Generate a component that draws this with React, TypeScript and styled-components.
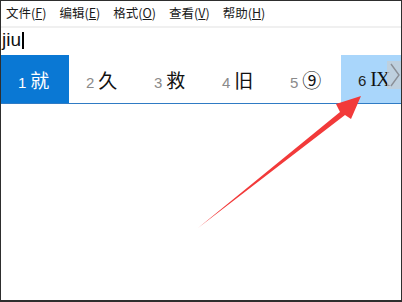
import * as React from 'react'
import styled, { createGlobalStyle } from 'styled-components'

const menus = [
    { label: '文件', key: 'F' },
    { label: '编辑', key: 'E' },
    { label: '格式', key: 'O' },
    { label: '查看', key: 'V' },
    { label: '帮助', key: 'H' }
]

const candidates = ['就', '久', '救', '旧', '⑨', 'IX']

export default class App extends React.Component {
    public render() {
        return (
            <Window>
                <GlobalStyle />
                <MenuBar>
                    {menus.map(m => (
                        <MenuItem key={m.key}>
                            {m.label}(<u>{m.key}</u>)
                        </MenuItem>
                    ))}
                </MenuBar>
                <Editor>
                    jiu<Caret />
                </Editor>

                <CandidateBar>
                    {candidates.map((c, i) => (
                        <Candidate key={c} state={i === 0 ? 'active' : i === 5 ? 'hover' : 'normal'}>
                            <div>
                                <span>{i + 1}</span>
                                <b className={c === 'IX' ? 'serif' : ''}>{c}</b>
                            </div>
                        </Candidate>
                    ))}
                    <NextPage>
                        <svg width='12' height='26' viewBox='0 0 12 26'>
                            <path d='M2 2 L10 13 L2 24' fill='none' stroke='#8a8f96' strokeWidth='1.4' />
                        </svg>
                    </NextPage>
                </CandidateBar>

                <Arrow width='402' height='302' viewBox='0 0 402 302'>
                    <path d='M198 228 L340 112 L336 104 L361 96 L351 119 L345 115 Z' fill='#f23a3a' />
                </Arrow>
            </Window>
        )
    }
}

const GlobalStyle = createGlobalStyle`
    body {
        margin: 0;
        background: #fff;
        font-family: 'Noto Sans CJK SC', 'Liberation Sans', sans-serif;
    }
`

const Window = styled.div`
    position: relative;
    width: 402px;
    height: 302px;
    box-sizing: border-box;
    border: 1px solid #2e2e2e;
    border-bottom-width: 2px;
    background: #fff;
    overflow: hidden;
`

const MenuBar = styled.div`
    display: flex;
    height: 25px;
    padding-left: 5px;
    border-bottom: 2px solid #f0f0f0;
    align-items: center;
`

const MenuItem = styled.div`
    font-size: 12.5px;
    color: #1a1a1a;
    margin-right: 13px;
    line-height: 1;
    u {
        text-underline-offset: 1px;
    }
`

const Editor = styled.div`
    display: flex;
    align-items: center;
    height: 24px;
    padding-left: 1px;
    font-family: 'Liberation Sans', sans-serif;
    font-size: 19px;
    color: #111;
`

const Caret = styled.i`
    display: inline-block;
    width: 2px;
    height: 17px;
    background: #000;
    margin-left: 1px;
`

const CandidateBar = styled.div`
    position: absolute;
    left: 0;
    top: 54px;
    width: 420px;
    height: 48px;
    display: flex;
    background: #fff;
    border-bottom: 1px solid #2f7bc4;
`

const Candidate = styled.div<{ state: string }>`
    flex: 0 0 68px;
    display: flex;
    align-items: center;
    padding-left: 17px;
    box-sizing: border-box;
    background: ${props => props.state === 'active' ? '#0a78d4' : props.state === 'hover' ? '#a9d6fb' : '#fff'};
    > div {
        display: flex;
        align-items: baseline;
    }
    span {
        font-family: 'Liberation Sans', sans-serif;
        font-size: 15px;
        margin-right: 4px;
        color: ${props => props.state === 'active' ? '#fff' : props.state === 'hover' ? '#222' : '#8a8a8a'};
    }
    b {
        font-weight: normal;
        font-size: 19px;
        color: ${props => props.state === 'active' ? '#fff' : '#111'};
    }
    b.serif {
        font-family: 'Liberation Serif', serif;
        font-size: 20px;
        letter-spacing: -1px;
    }
`

const NextPage = styled.div`
    position: absolute;
    left: 386px;
    top: 6px;
    width: 16px;
    height: 28px;
    display: flex;
    align-items: center;
    justify-content: center;
    background: rgba(200, 205, 210, 0.7);
`

const Arrow = styled.svg`
    position: absolute;
    left: -1px;
    top: -1px;
    pointer-events: none;
`
